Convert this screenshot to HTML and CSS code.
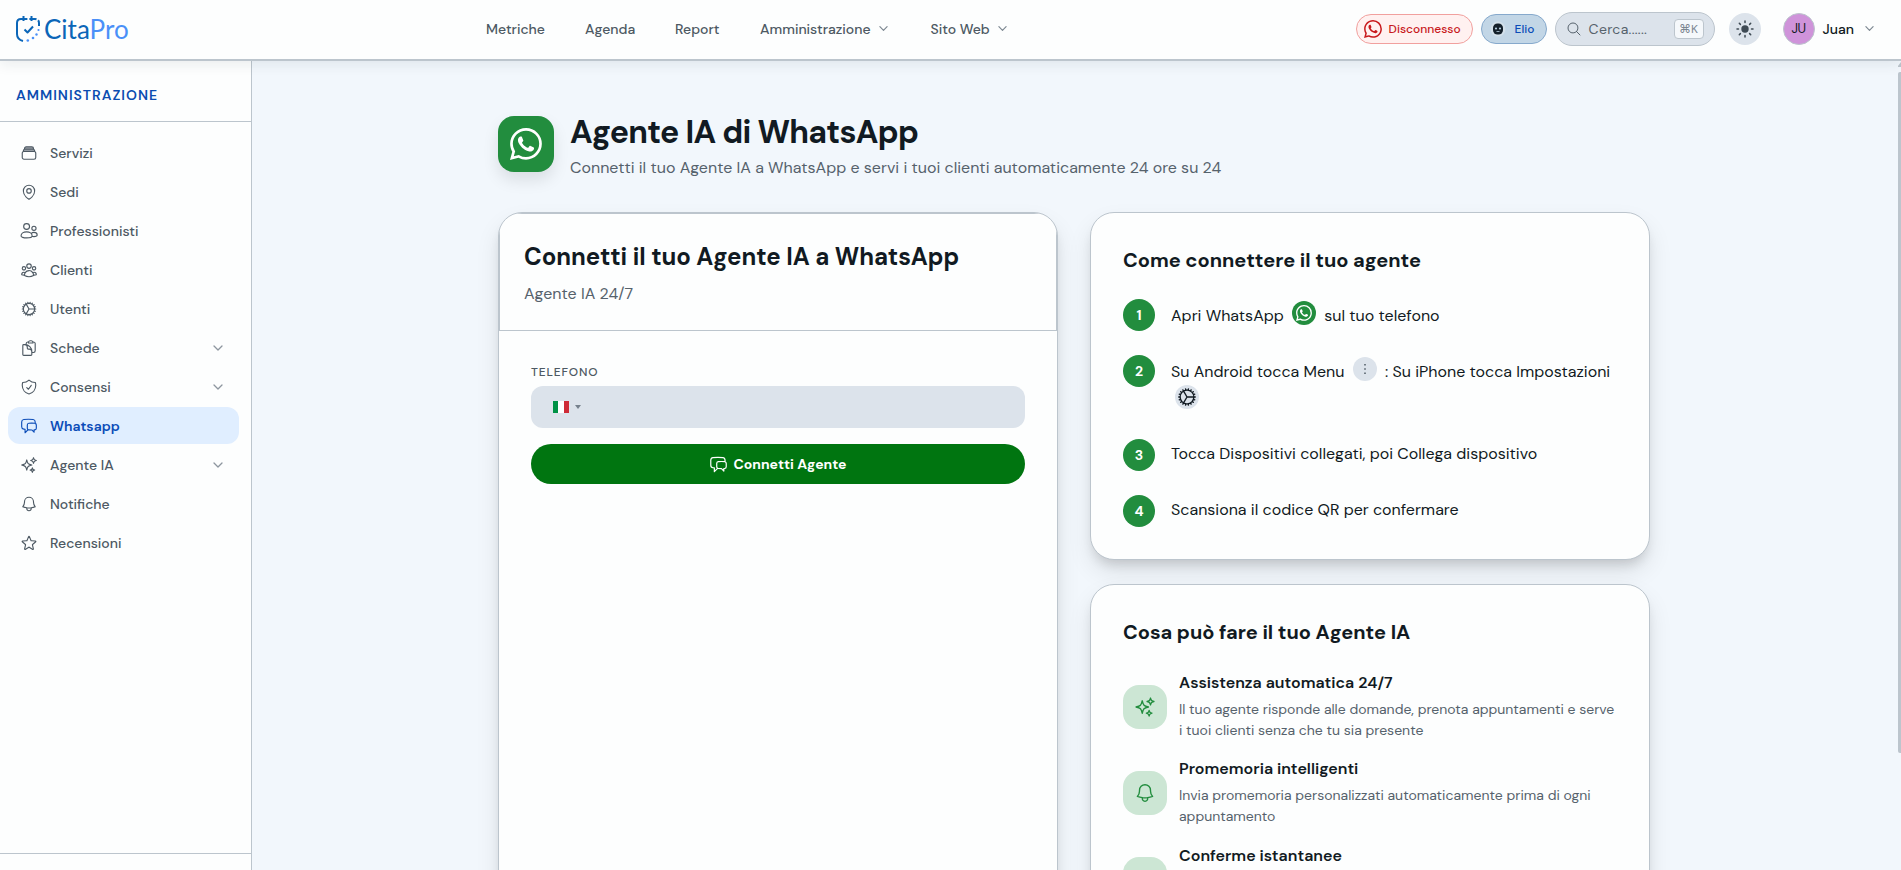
FILE: index.html
```html
<!DOCTYPE html>
<html lang="it">
<head>
  <meta charset="UTF-8" />
  <title>CitaPro - Agente IA di WhatsApp</title>
  <link rel="stylesheet" href="styles.css">
</head>
<body>
  <svg class="sprite">
    <symbol id="i-stack" viewBox="0 0 24 24"><path fill="currentColor" fill-opacity=".45" stroke="none" d="M6 6.9V6a2.25 2.25 0 0 1 2.25-2.25h7.5A2.25 2.25 0 0 1 18 6v.9l1.5 3h-15z"/><path d="M6 6.878V6a2.25 2.25 0 0 1 2.25-2.25h7.5A2.25 2.25 0 0 1 18 6v.878m-12 0c.235-.083.487-.128.75-.128h10.5c.263 0 .515.045.75.128m-12 0A2.25 2.25 0 0 0 4.5 9v.878m13.5-3A2.25 2.25 0 0 1 19.5 9v.878m0 0a2.246 2.246 0 0 0-.75-.128H5.25c-.263 0-.515.045-.75.128m15 0A2.25 2.25 0 0 1 21 12v6a2.25 2.25 0 0 1-2.25 2.25H5.25A2.25 2.25 0 0 1 3 18v-6c0-.98.626-1.813 1.5-2.122"/></symbol>
    <symbol id="i-pin" viewBox="0 0 24 24"><path d="M15 10.5a3 3 0 1 1-6 0 3 3 0 0 1 6 0Z"/><path d="M19.5 10.5c0 7.142-7.5 11.25-7.5 11.25S4.5 17.642 4.5 10.5a7.5 7.5 0 1 1 15 0Z"/></symbol>
    <symbol id="i-users" viewBox="0 0 24 24"><circle cx="8.8" cy="6" r="3.9"/><circle cx="18.6" cy="8.4" r="2.8"/><path d="M1.4 18.6c0-3.2 3.3-5.4 7.4-5.4s7.4 2.2 7.4 5.4c0 1.5-3.3 2.6-7.4 2.6s-7.4-1.1-7.4-2.6ZM15 15.2c1-.9 2.2-1.3 3.6-1.3 2.5 0 4.3 1.5 4.3 3.5 0 1.3-1.8 2.1-4.3 2.1-.9 0-1.8-.1-2.5-.4"/></symbol>
    <symbol id="i-group" viewBox="0 0 24 24"><path d="M18 18.72a9.094 9.094 0 0 0 3.741-.479 3 3 0 0 0-4.682-2.72m.94 3.198.001.031c0 .225-.012.447-.037.666A11.944 11.944 0 0 1 12 21c-2.17 0-4.207-.576-5.963-1.584A6.062 6.062 0 0 1 6 18.719m12 0a5.971 5.971 0 0 0-.941-3.197m0 0A5.995 5.995 0 0 0 12 12.75a5.995 5.995 0 0 0-5.058 2.772m0 0a3 3 0 0 0-4.681 2.72 8.986 8.986 0 0 0 3.74.477m.94-3.197a5.971 5.971 0 0 0-.94 3.197M15 6.75a3 3 0 1 1-6 0 3 3 0 0 1 6 0Zm6 3a2.25 2.25 0 1 1-4.5 0 2.25 2.25 0 0 1 4.5 0Zm-13.5 0a2.25 2.25 0 1 1-4.5 0 2.25 2.25 0 0 1 4.5 0Z"/></symbol>
    <symbol id="i-cog" viewBox="0 0 24 24"><path d="M4.5 12a7.5 7.5 0 0 0 15 0m-15 0a7.5 7.5 0 1 1 15 0m-15 0H3m16.5 0H21m-1.5 0H12m-8.457 3.077 1.41-.513m14.095-5.13 1.41-.513M5.106 17.785l1.15-.964m11.49-9.642 1.149-.964M7.501 19.795l.75-1.3m7.5-12.99.75-1.3m-6.063 16.658.26-1.477m2.605-14.772.26-1.477m0 17.726-.26-1.477M10.698 4.614l-.26-1.477M16.5 19.794l-.75-1.299M7.5 4.205 12 12m6.894 5.785-1.149-.964M6.256 7.178l-1.15-.964m15.352 8.864-1.41-.513M4.954 9.435l-1.41-.514M12.002 12l-3.75 6.495"/></symbol>
    <symbol id="i-clipboard" viewBox="0 0 24 24"><path d="M8.25 7.5V6.108c0-1.135.845-2.098 1.976-2.192.373-.03.748-.057 1.123-.08M15.75 18H18a2.25 2.25 0 0 0 2.25-2.25V6.108c0-1.135-.845-2.098-1.976-2.192a48.424 48.424 0 0 0-1.123-.08M15.75 18.75v-1.875a3.375 3.375 0 0 0-3.375-3.375h-1.5a1.125 1.125 0 0 1-1.125-1.125v-1.5A3.375 3.375 0 0 0 6.375 7.5H5.25m11.9-3.664A2.251 2.251 0 0 0 15 2.25h-1.5a2.251 2.251 0 0 0-2.15 1.586m5.8 0c.065.21.1.433.1.664v.75h-6V4.5c0-.231.035-.454.1-.664M6.75 7.5H4.875c-.621 0-1.125.504-1.125 1.125v12c0 .621.504 1.125 1.125 1.125h9.75c.621 0 1.125-.504 1.125-1.125V16.5a9 9 0 0 0-9-9Z"/></symbol>
    <symbol id="i-shield" viewBox="0 0 24 24"><path d="M9 12.75 11.25 15 15 9.75m-3-7.036A11.959 11.959 0 0 1 3.598 6 11.99 11.99 0 0 0 3 9.749c0 5.592 3.824 10.29 9 11.623 5.176-1.332 9-6.03 9-11.622 0-1.31-.21-2.571-.598-3.751h-.152c-3.196 0-6.1-1.248-8.25-3.285Z"/></symbol>
    <symbol id="i-chat" viewBox="0 0 24 24"><path d="M20.25 8.511c.884.284 1.5 1.128 1.5 2.097v4.286c0 1.136-.847 2.1-1.98 2.193-.34.027-.68.052-1.02.072v3.091l-3-3c-1.354 0-2.694-.055-4.02-.163a2.115 2.115 0 0 1-.825-.242m9.345-8.334a2.126 2.126 0 0 0-.476-.095 48.64 48.64 0 0 0-8.048 0c-1.131.094-1.976 1.057-1.976 2.192v4.286c0 .837.46 1.58 1.155 1.951m9.345-8.334V6.637c0-1.621-1.152-3.026-2.76-3.235A48.455 48.455 0 0 0 11.25 3c-2.115 0-4.198.137-6.24.402-1.608.209-2.76 1.614-2.76 3.235v6.226c0 1.621 1.152 3.026 2.76 3.235.577.075 1.157.14 1.74.194V21l4.155-4.155"/></symbol>
    <symbol id="i-sparkles" viewBox="0 0 24 24"><path d="M9.813 15.904 9 18.75l-.813-2.846a4.5 4.5 0 0 0-3.09-3.09L2.25 12l2.846-.813a4.5 4.5 0 0 0 3.09-3.09L9 5.25l.813 2.846a4.5 4.5 0 0 0 3.09 3.09L15.75 12l-2.846.813a4.5 4.5 0 0 0-3.09 3.09ZM18.259 8.715 18 9.75l-.259-1.035a3.375 3.375 0 0 0-2.455-2.456L14.25 6l1.036-.259a3.375 3.375 0 0 0 2.455-2.456L18 2.25l.259 1.035a3.375 3.375 0 0 0 2.456 2.456L21.75 6l-1.035.259a3.375 3.375 0 0 0-2.456 2.456ZM16.894 20.567 16.5 21.75l-.394-1.183a2.25 2.25 0 0 0-1.423-1.423L13.5 18.75l1.183-.394a2.25 2.25 0 0 0 1.423-1.423l.394-1.183.394 1.183a2.25 2.25 0 0 0 1.423 1.423l1.183.394-1.183.394a2.25 2.25 0 0 0-1.423 1.423Z"/></symbol>
    <symbol id="i-bell" viewBox="0 0 24 24"><path d="M14.857 17.082a23.848 23.848 0 0 0 5.454-1.31A8.967 8.967 0 0 1 18 9.75V9A6 6 0 0 0 6 9v.75a8.967 8.967 0 0 1-2.312 6.022c1.733.64 3.56 1.085 5.455 1.31m5.714 0a24.255 24.255 0 0 1-5.714 0m5.714 0a3 3 0 1 1-5.714 0"/></symbol>
    <symbol id="i-star" viewBox="0 0 24 24"><path d="M11.48 3.499a.562.562 0 0 1 1.04 0l2.125 5.111a.563.563 0 0 0 .475.345l5.518.442c.499.04.701.663.321.988l-4.204 3.602a.563.563 0 0 0-.182.557l1.285 5.385a.562.562 0 0 1-.84.61l-4.725-2.885a.562.562 0 0 0-.586 0L6.982 20.54a.562.562 0 0 1-.84-.61l1.285-5.386a.562.562 0 0 0-.182-.557l-4.204-3.602a.562.562 0 0 1 .321-.988l5.518-.442a.563.563 0 0 0 .475-.345L11.48 3.5Z"/></symbol>
    <symbol id="i-check" viewBox="0 0 24 24"><path d="M9 12.75 11.25 15 15 9.75M21 12a9 9 0 1 1-18 0 9 9 0 0 1 18 0Z"/></symbol>
    <symbol id="i-search" viewBox="0 0 24 24"><path d="m21 21-5.197-5.197m0 0A7.5 7.5 0 1 0 5.196 5.196a7.5 7.5 0 0 0 10.607 10.607Z"/></symbol>
    <symbol id="i-down" viewBox="0 0 10 10"><path d="M1 3l4 4 4-4"/></symbol>
    <symbol id="i-whatsapp" viewBox="0 0 16 16"><path fill="currentColor" stroke="none" d="M13.601 2.326A7.85 7.85 0 0 0 7.994 0C3.627 0 .068 3.558.064 7.926c0 1.399.366 2.76 1.057 3.965L0 16l4.204-1.102a7.9 7.9 0 0 0 3.79.965h.004c4.368 0 7.926-3.558 7.93-7.93A7.9 7.9 0 0 0 13.6 2.326zM7.994 14.521a6.6 6.6 0 0 1-3.356-.92l-.24-.144-2.494.654.666-2.433-.156-.251a6.56 6.56 0 0 1-1.007-3.505c0-3.626 2.957-6.584 6.591-6.584a6.56 6.56 0 0 1 4.66 1.931 6.56 6.56 0 0 1 1.928 4.66c-.004 3.639-2.961 6.592-6.592 6.592m3.615-4.934c-.197-.099-1.17-.578-1.353-.646-.182-.065-.315-.099-.445.099-.133.197-.513.646-.627.775-.114.133-.232.148-.43.05-.197-.1-.836-.308-1.592-.985-.59-.525-.985-1.175-1.103-1.372-.114-.198-.011-.304.088-.403.087-.088.197-.232.296-.346.1-.114.133-.198.198-.33.065-.134.034-.248-.015-.347-.05-.099-.445-1.076-.612-1.47-.16-.389-.323-.335-.445-.34-.114-.007-.247-.007-.38-.007a.73.73 0 0 0-.529.247c-.182.198-.691.677-.691 1.654s.71 1.916.81 2.049c.098.133 1.394 2.132 3.383 2.992.47.205.84.326 1.129.418.475.152.904.129 1.246.08.38-.058 1.171-.48 1.338-.943.164-.464.164-.86.114-.943-.049-.084-.182-.133-.38-.232"/></symbol>
  </svg>

  <header class="topbar">
    <a class="logo">
      <svg class="logo-mark" viewBox="0 0 24 26">
        <path d="M7 25C3 24 1 21.5 1 18V7c0-2.5 1.5-4 4-4h14c2.5 0 4 1.5 4 4v3" stroke-dasharray="33.5 2 7 2 20"/>
        <path d="M7.5 0v5M15.5 0v5"/>
        <path d="M8.5 13.5l3 3L17 10.500"/>
        <g class="logo-dots"><circle cx="22.5" cy="14" r="1.1"/><circle cx="20.5" cy="18.5" r="1.2"/><circle cx="17" cy="22" r="1.3"/><circle cx="11.8" cy="24.5" r="1.3"/></g>
      </svg>
      <span class="logo-text">Cita<b>Pro</b></span>
    </a>
    <nav class="main-nav">
      <a>Metriche</a>
      <a>Agenda</a>
      <a>Report</a>
      <a>Amministrazione <svg class="caret"><use href="#i-down"/></svg></a>
      <a>Sito Web <svg class="caret"><use href="#i-down"/></svg></a>
    </nav>
    <div class="tools">
      <span class="pill pill-red"><svg><use href="#i-whatsapp"/></svg>Disconnesso</span>
      <span class="pill pill-blue">
        <svg class="bot" viewBox="0 0 16 16"><circle cx="8" cy="8" r="7.5" fill="#d3e0ea"/><rect x="3" y="2.5" width="10" height="11" rx="4.5" fill="#14202b"/><circle cx="6" cy="7.5" r="1.1" fill="#b9cfe0"/><circle cx="10" cy="7.5" r="1.1" fill="#b9cfe0"/><rect x="6.5" y="10" width="3" height=".8" fill="#b9cfe0"/></svg>
        Elio
      </span>
      <div class="search">
        <svg><use href="#i-search"/></svg>
        <span>Cerca......</span>
        <kbd>⌘K</kbd>
      </div>
      <button class="theme">
        <svg viewBox="0 0 18 18"><circle cx="9" cy="9" r="3.7" fill="currentColor" stroke="none"/><path d="M9 1v1.5M9 15.5V17M1 9h1.5M15.5 9H17M3.3 3.3l1.1 1.1M13.6 13.6l1.1 1.1M3.3 14.7l1.1-1.1M13.6 4.4l1.1-1.1"/></svg>
      </button>
      <div class="user">
        <span class="avatar">JU</span>
        <span>Juan</span>
        <svg class="caret"><use href="#i-down"/></svg>
      </div>
    </div>
  </header>

  <div class="layout">
    <aside class="sidebar">
      <h2 class="side-title">AMMINISTRAZIONE</h2>
      <nav class="side-nav">
        <a><svg><use href="#i-stack"/></svg>Servizi</a>
        <a><svg><use href="#i-pin"/></svg>Sedi</a>
        <a><svg><use href="#i-users"/></svg>Professionisti</a>
        <a><svg><use href="#i-group"/></svg>Clienti</a>
        <a><svg><use href="#i-cog"/></svg>Utenti</a>
        <a><svg><use href="#i-clipboard"/></svg>Schede<svg class="caret"><use href="#i-down"/></svg></a>
        <a><svg><use href="#i-shield"/></svg>Consensi<svg class="caret"><use href="#i-down"/></svg></a>
        <a class="active"><svg><use href="#i-chat"/></svg>Whatsapp</a>
        <a><svg><use href="#i-sparkles"/></svg>Agente IA<svg class="caret"><use href="#i-down"/></svg></a>
        <a><svg><use href="#i-bell"/></svg>Notifiche</a>
        <a><svg><use href="#i-star"/></svg>Recensioni</a>
      </nav>
      <div class="side-footer"></div>
    </aside>

    <main class="content">
      <div class="container">
        <div class="page-head">
          <div class="page-icon"><svg><use href="#i-whatsapp"/></svg></div>
          <div>
            <h1>Agente IA di WhatsApp</h1>
            <p>Connetti il tuo Agente IA a WhatsApp e servi i tuoi clienti automaticamente 24 ore su 24</p>
          </div>
        </div>

        <div class="columns">
          <section class="card connect">
            <div class="connect-head">
              <h2>Connetti il tuo Agente IA a WhatsApp</h2>
              <p>Agente IA 24/7</p>
            </div>
            <div class="connect-body">
              <label>TELEFONO</label>
              <div class="phone">
                <span class="flag"></span>
                <span class="arrow"></span>
              </div>
              <button class="connect-btn"><svg><use href="#i-chat"/></svg>Connetti Agente</button>
            </div>
          </section>

          <div class="side-cards">
            <section class="card info">
              <h3>Come connettere il tuo agente</h3>
              <ol class="steps">
                <li><span class="num">1</span><p>Apri WhatsApp <span class="chip green"><svg><use href="#i-whatsapp"/></svg></span> sul tuo telefono</p></li>
                <li class="tall"><span class="num">2</span><p>Su Android tocca Menu <span class="chip dots"><svg viewBox="0 0 16 16"><path fill="currentColor" stroke="none" d="M7.2 3h1.6v1.6H7.2zM7.2 7.2h1.6v1.6H7.2zM7.2 11.4h1.6V13H7.2z"/></svg></span> : Su iPhone tocca Impostazioni <span class="chip gear"><svg><use href="#i-cog"/></svg></span></p></li>
                <li><span class="num">3</span><p>Tocca Dispositivi collegati, poi Collega dispositivo</p></li>
                <li><span class="num">4</span><p>Scansiona il codice QR per confermare</p></li>
              </ol>
            </section>

            <section class="card info">
              <h3>Cosa può fare il tuo Agente IA</h3>
              <ul class="features">
                <li>
                  <span class="feature-icon"><svg><use href="#i-sparkles"/></svg></span>
                  <div>
                    <h4>Assistenza automatica 24/7</h4>
                    <p>Il tuo agente risponde alle domande, prenota appuntamenti e serve i tuoi clienti senza che tu sia presente</p>
                  </div>
                </li>
                <li>
                  <span class="feature-icon"><svg><use href="#i-bell"/></svg></span>
                  <div>
                    <h4>Promemoria intelligenti</h4>
                    <p>Invia promemoria personalizzati automaticamente prima di ogni appuntamento</p>
                  </div>
                </li>
                <li>
                  <span class="feature-icon"><svg><use href="#i-check"/></svg></span>
                  <div>
                    <h4>Conferme istantanee</h4>
                  </div>
                </li>
              </ul>
            </section>
          </div>
        </div>
      </div>
    </main>
    <div class="scrollbar"><span class="scroll-up"></span><span class="scroll-thumb"></span></div>
  </div>
</body>
</html>
```

FILE: styles.css
```css
* {
  box-sizing: border-box;
  margin: 0;
  padding: 0;
}

body {
  height: 870px;
  overflow: hidden;
  font-family: 'DM Sans', Inter, 'Liberation Sans', sans-serif;
  font-size: 16px;
  line-height: 24px;
  color: #111a22;
  background: #f2f7fc;
}

svg {
  width: 18px;
  height: 18px;
  flex: none;
  fill: none;
  stroke: currentColor;
  stroke-width: 1.5;
  stroke-linecap: round;
  stroke-linejoin: round;
}

.sprite {
  display: none;
}

button {
  border: none;
  font: inherit;
  cursor: pointer;
}

.caret {
  width: 9px;
  height: 9px;
  stroke-width: 1.3;
  color: #7c8791;
}

/* header */
.topbar {
  position: relative;
  z-index: 2;
  display: flex;
  align-items: center;
  height: 61px;
  padding: 0 27px 2px 16px;
  background: #fdfefe;
  border-bottom: 2px solid #bcc5cd;
  box-shadow: 0 4px 12px rgba(30, 50, 70, 0.08);
}

.logo {
  display: flex;
  align-items: center;
  gap: 4px;
  width: 470px;
}

.logo-mark {
  width: 24px;
  height: 26px;
  stroke: #0b66b8;
  stroke-width: 2;
  stroke-linecap: butt;
}

.logo-dots {
  fill: #4a90f8;
  stroke: none;
}

.logo-text {
  font-family: Lato, sans-serif;
  font-size: 26px;
  color: #0b66b8;
}

.logo-text b {
  font-weight: 400;
  color: #4a90f8;
}

.main-nav {
  display: grid;
  grid-template-columns: 99px 90px 85px 170.5px auto;
  font-size: 14px;
  font-weight: 500;
  color: #4d5963;
}

.main-nav a {
  display: flex;
  align-items: center;
  gap: 8px;
}

.tools {
  display: flex;
  align-items: center;
  gap: 8px;
  margin-left: auto;
}

.pill {
  display: flex;
  align-items: center;
  height: 30px;
  border-radius: 15px;
  font-size: 12px;
  font-weight: 500;
}

.pill-red {
  width: 117px;
  padding-left: 7px;
  gap: 7px;
  color: #c8191c;
  background: #fff1f0;
  border: 1px solid #f1a09e;
}

.pill-blue {
  width: 66px;
  padding-left: 8px;
  gap: 9px;
  color: #0b4cb8;
  background: #c2d6e6;
  border: 1px solid #86a9cc;
}

.bot {
  width: 16px;
  height: 16px;
  stroke: none;
}

.search {
  display: flex;
  align-items: center;
  width: 160px;
  height: 34px;
  padding: 0 10px;
  border: 1px solid #bcc5cd;
  border-radius: 17px;
  background: #dce3eb;
  font-size: 14px;
  letter-spacing: 0.3px;
  color: #56626c;
}

.search svg {
  width: 16px;
  height: 16px;
  margin-right: 7px;
}

.search kbd {
  width: 30px;
  height: 20px;
  margin-left: auto;
  border: 1px solid #bcc5cd;
  border-radius: 4px;
  background: #f5f8fb;
  font-family: 'DM Sans', Inter, 'DejaVu Sans', sans-serif;
  font-size: 12px;
  line-height: 18px;
  letter-spacing: 0;
  text-align: center;
  color: #7c8791;
}

.theme {
  display: flex;
  align-items: center;
  justify-content: center;
  width: 32px;
  height: 32px;
  margin-left: 6px;
  border-radius: 50%;
  background: #dce3eb;
  color: #3e4a54;
}

.user {
  display: flex;
  align-items: center;
  margin-left: 14px;
  font-size: 14px;
  font-weight: 500;
}

.avatar {
  width: 32px;
  height: 32px;
  margin-right: 8px;
  border: 1px solid #bcc5cd;
  border-radius: 50%;
  background: #cf93da;
  font-size: 13px;
  font-weight: 400;
  line-height: 30px;
  letter-spacing: -0.5px;
  text-align: center;
}

.user .caret {
  margin-left: 11px;
}

/* sidebar */
.layout {
  display: flex;
  height: 809px;
}

.sidebar {
  display: flex;
  flex-direction: column;
  width: 252px;
  flex: none;
  background: #fdfefe;
  border-right: 1px solid #bcc5cd;
}

.side-title {
  height: 61px;
  padding-left: 16px;
  border-bottom: 1px solid #bcc5cd;
  font-size: 14px;
  font-weight: 600;
  line-height: 68px;
  letter-spacing: 1px;
  color: #0b4cb0;
}

.side-nav {
  display: flex;
  flex-direction: column;
  gap: 2px;
  padding: 12px 12px 0 8px;
}

.side-nav a {
  display: flex;
  align-items: center;
  gap: 12px;
  height: 37px;
  padding: 0 16px 0 12px;
  border-radius: 12px;
  font-size: 14px;
  font-weight: 500;
  color: #4d5963;
}

.side-nav .caret {
  width: 10px;
  height: 10px;
  margin-left: auto;
  color: #8d969f;
}

.side-nav .active {
  font-weight: 600;
  color: #0b4cb8;
  background: #e0eeff;
}

.side-footer {
  height: 17px;
  margin-top: auto;
  border-top: 1px solid #bcc5cd;
}

/* content */
.content {
  flex: 1;
  overflow: hidden;
}

.container {
  width: 1152px;
  margin: 0 auto;
  padding-top: 49px;
}

.page-head {
  display: flex;
  gap: 16px;
  height: 102px;
}

.page-icon {
  display: flex;
  align-items: center;
  justify-content: center;
  width: 56px;
  height: 56px;
  margin-top: 6px;
  border-radius: 16px;
  background: #228d3e;
  color: #fff;
  box-shadow: 0 8px 16px rgba(0, 0, 0, 0.1);
}

.page-icon svg {
  width: 32px;
  height: 32px;
}

h1 {
  font-size: 32px;
  font-weight: 700;
  line-height: 44px;
  letter-spacing: -0.7px;
}

.page-head p {
  margin-top: 2px;
  color: #56626c;
}

.columns {
  display: grid;
  grid-template-columns: 560px 560px;
  gap: 32px;
}

.card {
  background: #fdfefe;
  border: 1px solid #bcc5cd;
  border-radius: 24px;
  box-shadow: 0 12px 25px rgba(0, 0, 0, 0.09), 0 8px 12px -4px rgba(0, 0, 0, 0.14);
}

.connect {
  overflow: hidden;
}

.connect-head {
  height: 118px;
  padding: 27px 24px 0;
  border: 1px solid #bcc5cd;
}

.connect-head h2 {
  font-size: 24px;
  font-weight: 700;
  line-height: 32px;
  letter-spacing: -0.06px;
}

.connect-head p {
  margin-top: 9px;
  color: #56626c;
}

.connect-body {
  display: flex;
  flex-direction: column;
  padding: 31px 32px;
}

.connect-body label {
  font-size: 12px;
  font-weight: 500;
  line-height: 20px;
  letter-spacing: 0.85px;
  color: #4d5963;
}

.phone {
  display: flex;
  align-items: center;
  gap: 6px;
  height: 42px;
  margin: 4px 0 16px;
  padding-left: 22px;
  border-radius: 12px;
  background: #dce3eb;
}

.flag {
  width: 16px;
  height: 12px;
  background: linear-gradient(90deg, #009246 33%, #fff 33%, #fff 67%, #ce2b37 67%);
}

.arrow {
  border: 3px solid transparent;
  border-top: 4px solid #76818c;
  border-bottom: none;
}

.connect-btn {
  display: flex;
  align-items: center;
  justify-content: center;
  gap: 5px;
  height: 40px;
  border-radius: 20px;
  background: #007510;
  color: #fff;
  font-size: 14px;
  font-weight: 700;
}

.connect-btn svg {
  width: 19px;
  height: 19px;
}

.side-cards {
  display: flex;
  flex-direction: column;
  gap: 24px;
}

.info {
  padding: 32px;
}

h3 {
  font-size: 20px;
  font-weight: 700;
  line-height: 30px;
  letter-spacing: -0.03px;
}

.steps,
.features {
  list-style: none;
}

.steps {
  display: flex;
  flex-direction: column;
  gap: 24px;
  margin-top: 24px;
}

.steps li {
  display: flex;
  gap: 16px;
  height: 32px;
}

.steps .tall {
  height: 60px;
}

.steps p {
  margin-top: 3px;
  line-height: 28px;
}

.steps li:nth-child(n+3) p {
  margin-top: 1px;
}

.num {
  flex: none;
  width: 32px;
  height: 32px;
  border-radius: 50%;
  background: #228d3e;
  color: #fff;
  font-size: 14px;
  font-weight: 700;
  line-height: 32px;
  text-align: center;
}

.chip {
  display: inline-flex;
  align-items: center;
  justify-content: center;
  width: 24px;
  height: 24px;
  margin: -6px 4px;
  border-radius: 50%;
  background: #dce3eb;
  vertical-align: 0;
}

.chip svg {
  width: 16px;
  height: 16px;
}

.green {
  background: #228d3e;
  color: #fff;
}

.dots {
  color: #56626c;
}

.gear {
  vertical-align: -3px;
}

.gear svg {
  width: 22px;
  height: 22px;
}

.features {
  margin-top: 23px;
}

.features li {
  display: flex;
  align-items: center;
  gap: 12px;
  height: 70px;
  margin-bottom: 16px;
}

.features li > div {
  padding-top: 2px;
}

.features li:last-child {
  align-items: flex-start;
}

.features li:last-child .feature-icon {
  margin-top: 15px;
}

.feature-icon {
  display: flex;
  align-items: center;
  justify-content: center;
  flex: none;
  width: 44px;
  height: 44px;
  margin-top: 3px;
  border-radius: 16px;
  background: #cce6d4;
  color: #228d3e;
}

.feature-icon svg {
  width: 22px;
  height: 22px;
}

h4 {
  font-size: 16px;
  font-weight: 600;
  line-height: 24px;
}

.features p {
  margin-top: 4px;
  font-size: 14px;
  line-height: 21px;
  color: #56626c;
}

/* thin scrollbar on the right edge */
.scrollbar {
  display: flex;
  flex-direction: column;
  gap: 5px;
  width: 5px;
  padding: 1px 0 0 2px;
}

.scroll-up {
  height: 5px;
  background: #bcc5cd;
  clip-path: polygon(0 80%, 100% 0, 100% 100%, 0 100%);
}

.scroll-thumb {
  height: 681px;
  border-radius: 2px 0 0 2px;
  background: #bcc5cd;
}
```
